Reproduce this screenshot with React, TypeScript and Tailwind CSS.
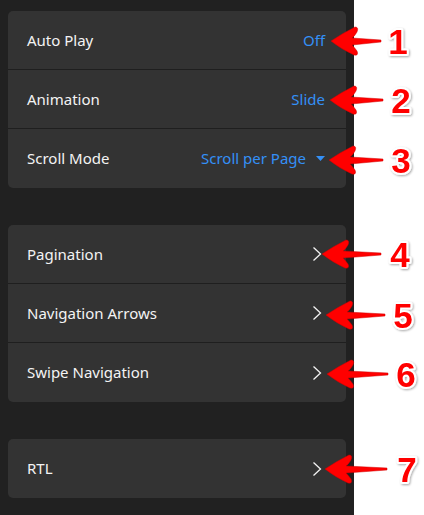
import React from "react";

type Row = { label: string; value?: string; kind: "value" | "select" | "chevron" };

const groups: Row[][] = [
  [
    { label: "Auto Play", value: "Off", kind: "value" },
    { label: "Animation", value: "Slide", kind: "value" },
    { label: "Scroll Mode", value: "Scroll per Page", kind: "select" },
  ],
  [
    { label: "Pagination", kind: "chevron" },
    { label: "Navigation Arrows", kind: "chevron" },
    { label: "Swipe Navigation", kind: "chevron" },
  ],
  [{ label: "RTL", kind: "chevron" }],
];

function Chevron() {
  return (
    <svg width="10" height="16" viewBox="0 0 10 16" className="block">
      <path d="M1.5 1.5 L8.5 8 L1.5 14.5" fill="none" stroke="#f2f2f2" strokeWidth="1.3" />
    </svg>
  );
}

function RowItem({ row, last }: { row: Row; last: boolean }) {
  return (
    <div
      className={
        "flex h-[59px] items-center justify-between pl-[19px] " +
        (row.kind === "chevron" ? "pr-[24px] " : "pr-[21px] ") +
        (last ? "" : "border-b border-[#1f1f1f]")
      }
    >
      <span className="text-[15px] text-[#f3f3f3]">{row.label}</span>
      {row.kind === "value" && <span className="text-[15px] text-[#3490f7]">{row.value}</span>}
      {row.kind === "select" && (
        <span className="flex items-center gap-[10px] text-[15px] text-[#3490f7]">
          {row.value}
          <svg width="9" height="5" viewBox="0 0 9 5" className="block">
            <path d="M0 0 L9 0 L4.5 5 Z" fill="#3490f7" />
          </svg>
        </span>
      )}
      {row.kind === "chevron" && <Chevron />}
    </div>
  );
}

const arrows = [
  { tipX: 331, y: 41, tailX: 381, num: "1", numX: 398 },
  { tipX: 330, y: 100, tailX: 383, num: "2", numX: 401 },
  { tipX: 329, y: 160, tailX: 383, num: "3", numX: 401 },
  { tipX: 322, y: 254, tailX: 381, num: "4", numX: 400 },
  { tipX: 326, y: 315, tailX: 385, num: "5", numX: 403 },
  { tipX: 327, y: 374, tailX: 388, num: "6", numX: 406 },
  { tipX: 325, y: 469, tailX: 387, num: "7", numX: 407 },
];

function arrowPath(tx: number, y: number, tail: number) {
  const hx = tx + 27;
  return [
    `M ${tx} ${y}`,
    `Q ${tx + 12} ${y - 8} ${hx - 3} ${y - 14}`,
    `Q ${hx + 1} ${y - 14} ${hx - 1} ${y - 9}`,
    `Q ${hx - 4} ${y - 4} ${hx - 6} ${y - 3}`,
    `L ${tail} ${y - 1}`,
    `L ${tail} ${y + 1}`,
    `L ${hx - 6} ${y + 4}`,
    `Q ${hx - 4} ${y + 6} ${hx - 1} ${y + 10}`,
    `Q ${hx + 1} ${y + 15} ${hx - 4} ${y + 14}`,
    `Q ${tx + 10} ${y + 8} ${tx} ${y}`,
    "Z",
  ].join(" ");
}

export default function App() {
  return (
    <div className="relative h-[515px] w-[424px] bg-white font-['Noto_Sans',sans-serif]">
      <div className="flex h-full w-[354px] flex-col gap-[37px] bg-[#212121] px-[8px] pt-[11px]">
        {groups.map((g, gi) => (
          <div key={gi} className="overflow-hidden rounded-[5px] bg-[#333333]">
            {g.map((r, ri) => (
              <RowItem key={r.label} row={r} last={ri === g.length - 1} />
            ))}
          </div>
        ))}
      </div>
      <svg className="pointer-events-none absolute left-0 top-0" width="424" height="515" viewBox="0 0 424 515">
        <defs>
          <filter id="sh" x="-20%" y="-20%" width="140%" height="140%">
            <feDropShadow dx="1" dy="1" stdDeviation="0.8" floodColor="#000" floodOpacity="0.35" />
          </filter>
        </defs>
        {arrows.map((a) => (
          <g key={a.num}>
            <path d={arrowPath(a.tipX, a.y, a.tailX)} fill="#ff0000" stroke="#d00000" strokeWidth="0.5" />
            <text
              x={a.numX}
              y={a.y + 13}
              textAnchor="middle"
              fontFamily="'Liberation Sans', Arial, sans-serif"
              fontWeight="bold"
              fontSize="35"
              fill="#ff0000"
              stroke="#ffffff"
              strokeWidth="4"
              paintOrder="stroke"
              strokeLinejoin="round"
              filter="url(#sh)"
            >
              {a.num}
            </text>
          </g>
        ))}
      </svg>
    </div>
  );
}
